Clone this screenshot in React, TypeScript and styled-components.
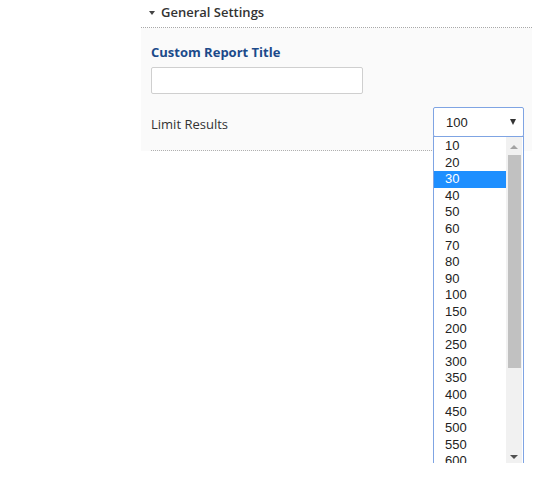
import React from "react";
import styled, { createGlobalStyle } from "styled-components";

const Global = createGlobalStyle`
  html, body { margin: 0; padding: 0; background: #ffffff; }
  body { font-family: "Open Sans", "Liberation Sans", sans-serif; }
`;

const Page = styled.div`
  width: 391px;
  min-height: 492px;
  margin-left: 141px;
  position: relative;
`;

const Heading = styled.div`
  height: 28px;
  display: flex;
  align-items: center;
  gap: 6px;
  padding-left: 8px;
  padding-bottom: 3px;
  box-sizing: border-box;
  border-bottom: 1px dotted #a8a8a8;
  font-family: "Open Sans", sans-serif;
  font-weight: 600;
  font-size: 13px;
  color: #333333;
`;

const Caret = styled.span`
  width: 0;
  height: 0;
  border-left: 3.5px solid transparent;
  border-right: 3.5px solid transparent;
  border-top: 4px solid #444444;
  margin-top: 1px;
`;

const Section = styled.div`
  background: #fafafa;
  padding: 15px 8px 0 10px;
`;

const FieldLabel = styled.div`
  font-family: "Open Sans", sans-serif;
  font-weight: 700;
  font-size: 13px;
  line-height: 18px;
  color: #1c4a8a;
  margin-bottom: 6px;
`;

const TextInput = styled.div`
  width: 212px;
  height: 27px;
  box-sizing: border-box;
  background: #ffffff;
  border: 1px solid #cfcfcf;
  border-radius: 2px;
`;

const Row = styled.div`
  display: flex;
  justify-content: space-between;
  align-items: flex-start;
  padding: 13px 0 13px 0;
  border-bottom: 1px dotted #b0b0b0;
`;

const RowLabel = styled.div`
  padding-top: 8px;
  font-family: "Open Sans", sans-serif;
  font-size: 13px;
  line-height: 18px;
  color: #333333;
`;

const SelectWrap = styled.div`
  position: relative;
  width: 91px;
  height: 30px;
`;

const SelectBox = styled.div`
  width: 91px;
  height: 30px;
  box-sizing: border-box;
  border: 1px solid #7fa4e3;
  border-radius: 2px;
  background: #ffffff;
  display: flex;
  align-items: center;
  justify-content: space-between;
  padding: 0 7px 0 12px;
  font-family: "Liberation Sans", Arial, sans-serif;
  font-size: 13px;
  color: #222222;
`;

const SelectArrow = styled.span`
  width: 0;
  height: 0;
  border-left: 3.5px solid transparent;
  border-right: 3.5px solid transparent;
  border-top: 6px solid #333333;
`;

const Popup = styled.div`
  position: absolute;
  top: 29px;
  left: 0;
  z-index: 10;
  width: 91px;
  height: 327px;
  box-sizing: border-box;
  border: 1px solid #7fa4e3;
  border-bottom: none;
  background: #ffffff;
  display: flex;
  overflow: hidden;
`;

const Options = styled.div`
  flex: 1;
  overflow: hidden;
  padding-top: 1px;
`;

const Option = styled.div<{ $active?: boolean }>`
  height: 16.6px;
  line-height: 16.6px;
  padding-left: 11px;
  font-family: "Liberation Sans", Arial, sans-serif;
  font-size: 13px;
  color: ${(p) => (p.$active ? "#ffffff" : "#222222")};
  background: ${(p) => (p.$active ? "#1e8fff" : "transparent")};
`;

const Scrollbar = styled.div`
  width: 16px;
  margin-right: 1px;
  background: #f1f1f1;
  display: flex;
  flex-direction: column;
  align-items: center;
`;

const ArrowUp = styled.span`
  width: 0;
  height: 0;
  margin-top: 8px;
  border-left: 4px solid transparent;
  border-right: 4px solid transparent;
  border-bottom: 4px solid #a3a3a3;
`;

const ArrowDown = styled.span`
  width: 0;
  height: 0;
  margin-top: auto;
  margin-bottom: 4px;
  border-left: 4px solid transparent;
  border-right: 4px solid transparent;
  border-top: 4px solid #505050;
`;

const Thumb = styled.div`
  width: 13px;
  height: 213px;
  margin-top: 6px;
  background: #c1c1c1;
`;

const values = [10, 20, 30, 40, 50, 60, 70, 80, 90, 100, 150, 200, 250, 300, 350, 400, 450, 500, 550, 600, 650, 700, 750, 800, 850, 900, 950, 1000];

export default function App() {
  return (
    <>
      <Global />
      <Page>
        <Heading>
          <Caret />
          General Settings
        </Heading>
        <Section>
          <FieldLabel>Custom Report Title</FieldLabel>
          <TextInput />
          <Row>
            <RowLabel>Limit Results</RowLabel>
            <SelectWrap>
              <SelectBox>
                100
                <SelectArrow />
              </SelectBox>
              <Popup>
                <Options>
                  {values.map((v) => (
                    <Option key={v} $active={v === 30}>
                      {v}
                    </Option>
                  ))}
                </Options>
                <Scrollbar>
                  <ArrowUp />
                  <Thumb />
                  <ArrowDown />
                </Scrollbar>
              </Popup>
            </SelectWrap>
          </Row>
        </Section>
      </Page>
    </>
  );
}
